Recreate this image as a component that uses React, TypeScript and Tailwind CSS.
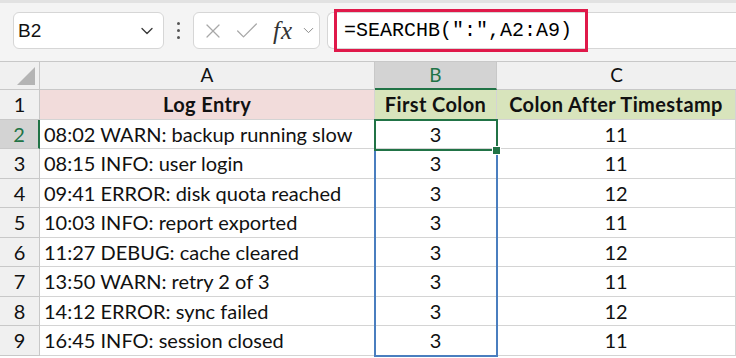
import { Check, ChevronDown, X } from "lucide-react";

const ROWS: [string, number, number][] = [
  ["08:02 WARN: backup running slow", 3, 11],
  ["08:15 INFO: user login", 3, 11],
  ["09:41 ERROR: disk quota reached", 3, 12],
  ["10:03 INFO: report exported", 3, 11],
  ["11:27 DEBUG: cache cleared", 3, 12],
  ["13:50 WARN: retry 2 of 3", 3, 11],
  ["14:12 ERROR: sync failed", 3, 12],
  ["16:45 INFO: session closed", 3, 11],
];

const cell = "h-[29.5px] border-b border-r border-[#d4d4d4] flex items-center";
const rowHead =
  "h-[29.5px] border-b border-r border-[#c8c8c8] bg-[#f0f0f0] flex items-center justify-center";
const head = "font-bold tracking-[0.4px]";

export default function App() {
  return (
    <div
      className="relative flex h-[358px] w-[736px] flex-col overflow-hidden bg-white text-[#111]"
      style={{ fontFamily: "Lato, 'Liberation Sans', sans-serif" }}
    >
      {/* toolbar */}
      <div className="flex h-[61px] shrink-0 items-center border-t-[3px] border-[#e2e2e2] bg-[#f4f4f4] pb-[3px]">
        <div className="ml-[13px] flex h-[37px] w-[151px] items-center justify-between rounded-[6px] border border-[#d6d6d6] bg-white pl-[4px] pr-[6px]">
          <span className="text-[19px] font-['Liberation_Sans'] leading-none">B2</span>
          <ChevronDown size={20} strokeWidth={1.6} className="text-[#3a3a3a]" />
        </div>
        <div className="mx-[13px] flex flex-col gap-[4px]">
          <span className="h-[3px] w-[3px] rounded-full bg-[#555]" />
          <span className="h-[3px] w-[3px] rounded-full bg-[#555]" />
          <span className="h-[3px] w-[3px] rounded-full bg-[#555]" />
        </div>
        <div className="flex h-[37px] w-[127px] items-center rounded-[6px] border border-[#d6d6d6] bg-white pl-[7px]">
          <X size={24} strokeWidth={1.2} className="text-[#a8a8a8]" />
          <Check size={28} strokeWidth={1.1} className="ml-[8px] text-[#a8a8a8]" />
          <span className="ml-[12px] font-['Liberation_Serif'] text-[25px] italic leading-none tracking-[1px] text-[#333]">
            fx
          </span>
          <ChevronDown size={17} strokeWidth={1.4} className="ml-[7px] text-[#8a8a8a]" />
        </div>
        <div className="ml-[7px] flex h-[37px] flex-1 items-center rounded-l-[6px] border border-r-0 border-[#d6d6d6] bg-white pl-[16px]">
          <span className="font-['Liberation_Mono'] text-[20px] leading-none text-black">
            =SEARCHB(&quot;:&quot;,A2:A9)
          </span>
        </div>
      </div>

      {/* annotation box around the formula */}
      <div className="absolute left-[334px] top-[9px] h-[43px] w-[254px] border-[3px] border-[#e0194a]" />

      {/* grid */}
      <div className="relative grid grid-cols-[40px_335px_122px_1fr] border-t border-[#c8c8c8] text-[20px]">
        {/* column headers */}
        <div className="relative h-[28px] border-b border-r border-[#c8c8c8] bg-[#f0f0f0]">
          <div
            className="absolute bottom-[4px] right-[4px] h-0 w-0 border-r-[#b4b4b4] border-t-transparent"
            style={{ borderTopWidth: 18, borderRightWidth: 18, borderStyle: "solid", borderLeftWidth: 0, borderBottomWidth: 0 }}
          />
        </div>
        <div className="flex h-[28px] items-center justify-center border-b border-r border-[#c8c8c8] bg-[#f0f0f0] text-[19px]">A</div>
        <div className="flex h-[28px] items-center justify-center border-b-2 border-r border-b-[#217346] border-r-[#c8c8c8] bg-[#d3d3d3] text-[19px] text-[#217346]">B</div>
        <div className="flex h-[28px] items-center justify-center border-b border-[#c8c8c8] bg-[#f0f0f0] text-[19px]">C</div>

        {/* row 1 */}
        <div className={rowHead}>1</div>
        <div className={`${cell} justify-center bg-[#f2dcdb] ${head}`}>Log Entry</div>
        <div className={`${cell} justify-center bg-[#d8e4bc] ${head}`}>First Colon</div>
        <div className={`${cell} justify-center bg-[#d8e4bc] ${head}`}>Colon After Timestamp</div>

        {ROWS.map(([log, first, after], i) => {
          const active = i === 0;
          return [
            <div
              key={`h${i}`}
              className={
                active
                  ? "flex h-[29.5px] items-center justify-center border-b border-r-2 border-b-[#c8c8c8] border-r-[#217346] bg-[#d3d3d3] text-[#217346]"
                  : rowHead
              }
            >
              {i + 2}
            </div>,
            <div key={`a${i}`} className={`${cell} pl-[4px] whitespace-nowrap`}>
              {log}
            </div>,
            <div key={`b${i}`} className={`${cell} justify-center`}>
              {first}
            </div>,
            <div key={`c${i}`} className={`${cell} justify-center`}>
              {after}
            </div>,
          ];
        })}

        {/* spill range outline */}
        <div className="pointer-events-none absolute left-[374px] top-[57px] h-[238px] w-[124px] border-2 border-[#4a7ebf]" />
        {/* active cell */}
        <div className="pointer-events-none absolute left-[374px] top-[57px] h-[32px] w-[124px] border-[2.5px] border-[#217346]" />
        {/* fill handle */}
        <div className="pointer-events-none absolute left-[492px] top-[84px] h-[9px] w-[9px] border border-white bg-[#217346]" />
      </div>
    </div>
  );
}
